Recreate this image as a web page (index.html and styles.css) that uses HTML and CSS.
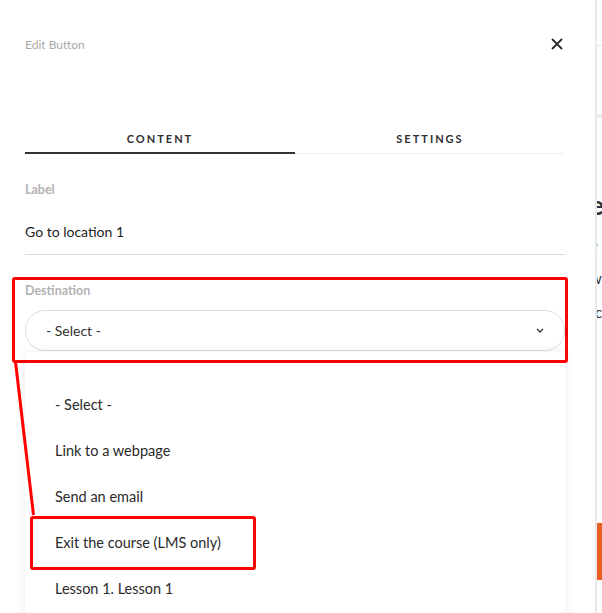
FILE: index.html
```html
<!DOCTYPE html>
<html>
<head>
<meta charset="utf-8">
<link rel="stylesheet" href="styles.css">
</head>
<body>
<div class="page">
  <div class="panel">
    <div class="header">
      <span class="title">Edit Button</span>
      <svg class="close" width="12" height="12" viewBox="0 0 12 12"><path d="M1 1 L11 11 M11 1 L1 11" stroke="#2b2b2b" stroke-width="1.8" fill="none"/></svg>
    </div>
    <div class="tabs">
      <div class="tab active">CONTENT</div>
      <div class="tab">SETTINGS</div>
    </div>
    <div class="field">
      <div class="label">Label</div>
      <div class="input">Go to location 1</div>
    </div>
    <div class="field dest">
      <div class="label">Destination</div>
      <div class="select">
        <span>- Select -</span>
        <svg class="chev" width="8" height="5" viewBox="0 0 8 5"><path d="M1 1 L4 4 L7 1" stroke="#333" stroke-width="1.3" fill="none"/></svg>
      </div>
      <ul class="options">
        <li>- Select -</li>
        <li>Link to a webpage</li>
        <li>Send an email</li>
        <li>Exit the course (LMS only)</li>
        <li>Lesson 1. Lesson 1</li>
      </ul>
    </div>
    <div class="mark mark-select"></div>
    <div class="mark mark-option"></div>
    <svg class="mark-line" width="40" height="160" viewBox="0 0 40 160"><path d="M3.5 0 L21.5 153" stroke="#ff0000" stroke-width="3" fill="none"/></svg>
  </div>
  <div class="bg">
    <div class="bg-top"></div>
    <div class="bg-band"></div>
    <div class="bg-text">
      <div class="bg-h">e</div>
      <div class="bg-p">e</div>
      <div class="bg-p">w</div>
      <div class="bg-p indent">c</div>
    </div>
    <div class="bg-btn"></div>
  </div>
</div>
</body>
</html>
```
FILE: styles.css
```css
html, body {
  margin: 0;
  padding: 0;
  background: #fff;
  font-family: Lato, "Open Sans", sans-serif;
  overflow: hidden;
}
.page {
  display: flex;
  width: 602px;
  height: 613px;
  overflow: hidden;
}
.panel {
  position: relative;
  width: 540px;
  flex: 0 0 540px;
  padding: 0 30px 0 25px;
  border-right: 2px solid #e9e9e9;
  height: 613px;
  box-sizing: content-box;
}
.header {
  display: flex;
  justify-content: space-between;
  align-items: center;
  height: 88px;
}
.title {
  font-size: 12px;
  color: #a9a9a9;
  margin-top: 1px;
}
.close {
  margin-right: 2px;
}
.tabs {
  display: flex;
  margin-top: 44px;
}
.tab {
  flex: 1;
  text-align: center;
  font-size: 11px;
  font-weight: 700;
  letter-spacing: 2px;
  color: #2e2e2e;
  padding-bottom: 7px;
  border-bottom: 1px solid #efefef;
}
.tab.active {
  border-bottom: 2px solid #333;
}
.field {
  margin-top: 28px;
}
.label {
  font-size: 12.5px;
  font-weight: 700;
  color: #b3b3b3;
}
.input {
  font-size: 14px;
  color: #1c1c1c;
  padding: 26px 0 14px;
  border-bottom: 1px solid #dcdcdc;
}
.dest {
  margin-top: 28px;
}
.select {
  margin-top: 12px;
  height: 39px;
  border: 1px solid #dedede;
  border-radius: 20px;
  display: flex;
  align-items: center;
  justify-content: space-between;
  padding: 0 20px 0 20px;
  font-size: 14px;
  color: #333;
}
.options {
  list-style: none;
  margin: 1px 0 0;
  padding: 30px 0 0;
  background: #fff;
  box-shadow: 0 0 10px rgba(0,0,0,0.07);
  height: 400px;
}
.options li {
  height: 46px;
  line-height: 46px;
  padding-left: 30px;
  font-size: 14.5px;
  color: #2a2a2a;
}
.mark {
  position: absolute;
  border: 3px solid #ff0000;
  border-radius: 3px;
  box-sizing: border-box;
}
.mark-select {
  left: 12px;
  top: 277px;
  width: 556px;
  height: 86px;
}
.mark-option {
  left: 30px;
  top: 516px;
  width: 226px;
  height: 54px;
}
.mark-line {
  position: absolute;
  left: 12px;
  top: 362px;
}
.bg {
  position: relative;
  flex: 1;
  background: #fff;
  overflow: hidden;
}
.bg-top {
  margin-top: 45px;
  height: 1px;
  background: #e6e6e6;
}
.bg-band {
  margin-top: 68px;
  height: 4px;
  background: #ececec;
}
.bg-text {
  margin-top: 72px;
  margin-left: -7px;
  color: #333;
}
.bg-h {
  font-size: 26px;
  font-weight: 700;
  line-height: 30px;
  margin-bottom: 7px;
}
.bg-p {
  font-size: 15px;
  line-height: 34px;
}
.indent {
  margin-left: 5px;
}
.bg-btn {
  position: absolute;
  left: 0;
  top: 523px;
  width: 10px;
  height: 57px;
  background: #e95f1f;
}
```
